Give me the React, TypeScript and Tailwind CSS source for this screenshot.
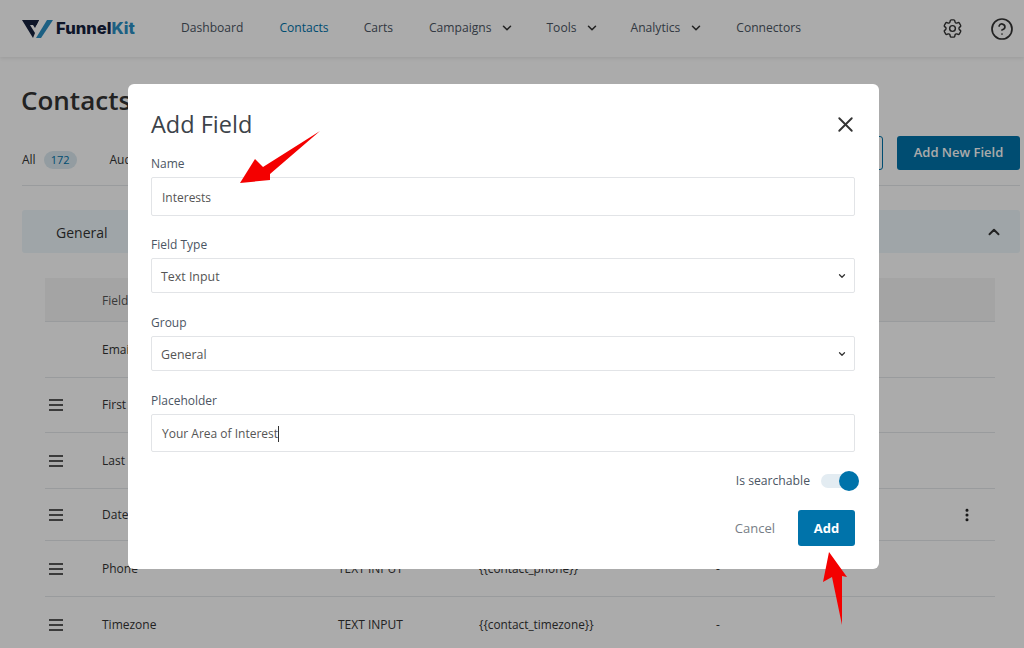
import React from "react";
import { ChevronDown, ChevronUp, CircleHelp, X, EllipsisVertical } from "lucide-react";
import { HiOutlineCog6Tooth } from "react-icons/hi2";

const font = "font-['Open_Sans',_'Noto_Sans',sans-serif]";

function NavItem({ label, active, drop, className = "" }: { label: string; active?: boolean; drop?: boolean; className?: string }) {
  return (
    <div className={`flex items-center gap-[9px] text-[12.1px] ${active ? "text-[#0073aa]" : "text-[#4b5563]"} ${className}`}>
      <span>{label}</span>
      {drop && <ChevronDown size={14} strokeWidth={2.6} className="text-[#333]" />}
    </div>
  );
}

function Handle() {
  return (
    <svg width="14" height="12" viewBox="0 0 14 12" className="text-[#222]">
      <path d="M0 1h14M0 6h14M0 11h14" stroke="currentColor" strokeWidth="1.7" />
    </svg>
  );
}

function Row({ h, name, type, tag, dash, handle, kebab, line = true }: { h: string; name: string; type?: string; tag?: string; dash?: boolean; handle?: boolean; kebab?: boolean; line?: boolean }) {
  return (
    <div className={`flex items-center ${h} ${line ? "border-b border-[#e5e7eb]" : ""} text-[12px] text-[#333]`}>
      <div className="w-[57px] pl-[4px] flex items-center">{handle && <Handle />}</div>
      <div className="w-[236px]">{name}</div>
      <div className="w-[141px]">{type}</div>
      <div className="w-[237px] text-[11.8px]">{tag}</div>
      <div className="w-[243px]">{dash ? "-" : ""}</div>
      {kebab && <EllipsisVertical size={16} strokeWidth={2.6} className="text-[#222]" />}
    </div>
  );
}

function Field({ label, value, h, mt, select, caret }: { label: string; value: string; h: string; mt: string; select?: boolean; caret?: boolean }) {
  return (
    <div className={mt}>
      <div className="text-[12px] leading-[14px] text-[#4b5563]">{label}</div>
      <div className={`mt-[6px] ${h} rounded-[2px] border border-[#e2e4e7] flex items-center justify-between ${select ? "pl-[9px] text-[12.4px]" : "pl-[10px] text-[12px]"} pr-[7px] text-[#555]`}>
        <span className={`flex items-center ${select ? "pt-[4px]" : "pt-[2px]"}`}>
          {value}
          {caret && <span className="w-px h-[16px] bg-[#333]" />}
        </span>
        {select && <ChevronDown size={10} strokeWidth={3} className="text-[#333]" />}
      </div>
    </div>
  );
}

export default function App() {
  return (
    <div className={`relative w-[1024px] h-[648px] overflow-hidden bg-white ${font}`}>
      {/* Page */}
      <header className="h-[57px] bg-white shadow-[0_1px_4px_rgba(0,0,0,0.1)] flex items-center pl-[22px] pr-[10px]">
        <div className="flex items-center gap-[3px] w-[159px]">
          <svg width="31" height="21" viewBox="0 0 31 21">
            <path d="M0 2h17l-2.5 5H8l5 8-2 5z" fill="#16213e" />
            <path d="M13 2h4l-4 8-2-3z" fill="#16213e" />
            <path d="M25 2h6L19 20h-5z" fill="#2b8fc4" />
          </svg>
          <span className="text-[16.6px] font-['Inter'] font-extrabold text-[#16213e]">Funnel<span className="text-[#2b8fc4]">Kit</span></span>
        </div>
        <nav className="flex items-center">
          <div className="flex items-center gap-[36px]">
            <NavItem label="Dashboard" />
            <NavItem label="Contacts" active />
            <NavItem label="Carts" className="ml-[-1px]" />
          </div>
          <div className="ml-[36px] flex items-center gap-[31px]">
            <NavItem label="Campaigns" drop />
            <NavItem label="Tools" drop className="ml-[1px]" />
            <NavItem label="Analytics" drop />
            <NavItem label="Connectors" className="ml-[2px]" />
          </div>
        </nav>
        <div className="ml-auto flex items-center gap-[26px] text-[#333]">
          <HiOutlineCog6Tooth size={23} />
          <CircleHelp size={24} strokeWidth={1.7} />
        </div>
      </header>

      <main className="pl-[22px] pr-[4px]">
        <h1 className="mt-[25px] ml-[-1px] text-[26px] leading-[36px] font-semibold text-[#333]">Contacts</h1>
        <div className="mt-[18px] h-[50px] flex items-start border-b border-[#e5e7eb]">
          <div className="mt-[7px] flex items-center h-[34px] gap-[8px] text-[12px] text-[#333]">
            <span>All</span>
            <span className="rounded-full bg-[#dbe9f0] text-[#0073aa] text-[11px] px-[7px] leading-[18px]">172</span>
            <span className="ml-[25px]">Audiences</span>
          </div>
          <div className="ml-auto flex gap-[14px]">
            <div className="w-[120px] h-[34px] rounded-[3px] border border-[#0073aa]" />
            <div className="w-[123px] h-[34px] rounded-[3px] bg-[#0073aa] text-white font-semibold text-[13px] flex items-center justify-center">Add New Field</div>
          </div>
        </div>
        <div className="mt-[24px] h-[43px] rounded-[3px] bg-[#eef7fb] flex items-center justify-between pl-[34px] pr-[17px] text-[14px] font-medium text-[#333]">
          <span className="pt-[2px]">General</span>
          <ChevronUp size={18} strokeWidth={2.6} />
        </div>
        <div className="mt-[25px] ml-[23px] mr-[25px]">
          <div className="h-[44px] bg-[#f5f5f5] border-b border-[#e5e7eb] flex items-center pl-[57px] pt-[2px] text-[12px] text-[#555]">Field Name</div>
          <Row h="h-[56px]" name="Email" />
          <Row h="h-[55px]" name="First Name" handle />
          <Row h="h-[56px]" name="Last Name" handle />
          <Row h="h-[52px]" name="Date of Birth" handle kebab />
          <Row h="h-[56px]" name="Phone" type="TEXT INPUT" tag="{{contact_phone}}" dash handle />
          <Row h="h-[56px]" name="Timezone" type="TEXT INPUT" tag="{{contact_timezone}}" dash handle line={false} />
        </div>
      </main>

      {/* Overlay */}
      <div className="absolute inset-0 bg-black/[0.33]" />

      {/* Modal */}
      <div className="absolute left-[128px] top-[84px] w-[751px] h-[485px] rounded-[6px] bg-white pl-[23px] pr-[24px]">
        <div className="mt-[23px] h-[34px] flex items-center justify-between">
          <h2 className="text-[23.5px] font-medium text-[#3c434a] leading-[34px]">Add Field</h2>
          <X size={25} strokeWidth={1.8} className="text-[#333] mr-[-3px]" />
        </div>
        <Field label="Name" value="Interests" h="h-[39px]" mt="mt-[16px]" />
        <Field label="Field Type" value="Text Input" h="h-[35px]" mt="mt-[22px]" select />
        <Field label="Group" value="General" h="h-[35px]" mt="mt-[23px]" select />
        <Field label="Placeholder" value="Your Area of Interest" h="h-[38px]" mt="mt-[23px]" caret />
        <div className="mt-[20px] flex items-center justify-end gap-[11px] mr-[-4px]">
          <span className="text-[12.2px] text-[#4b5563]">Is searchable</span>
          <div className="relative w-[38px] h-[14px] rounded-full bg-[#e3ecf2]">
            <div className="absolute right-0 top-[-3px] w-[20px] h-[20px] rounded-full bg-[#0073aa]" />
          </div>
        </div>
        <div className="mt-[20px] flex items-center justify-end gap-[23px]">
          <span className="text-[13px] text-[#777e86]">Cancel</span>
          <div className="w-[57px] h-[36px] rounded-[3px] bg-[#0073aa] text-white font-bold text-[13px] flex items-center justify-center">Add</div>
        </div>
      </div>

      {/* Annotation arrows */}
      <svg className="absolute left-0 top-0 pointer-events-none" width="1024" height="648" viewBox="0 0 1024 648">
        <path d="M320 131L263 167L255 159L240 183L270 180L270 174Z" fill="#f40000" />
        <path d="M829 552L847 577L842 576L842 625L832 577L823 582Z" fill="#f40000" />
      </svg>
    </div>
  );
}
